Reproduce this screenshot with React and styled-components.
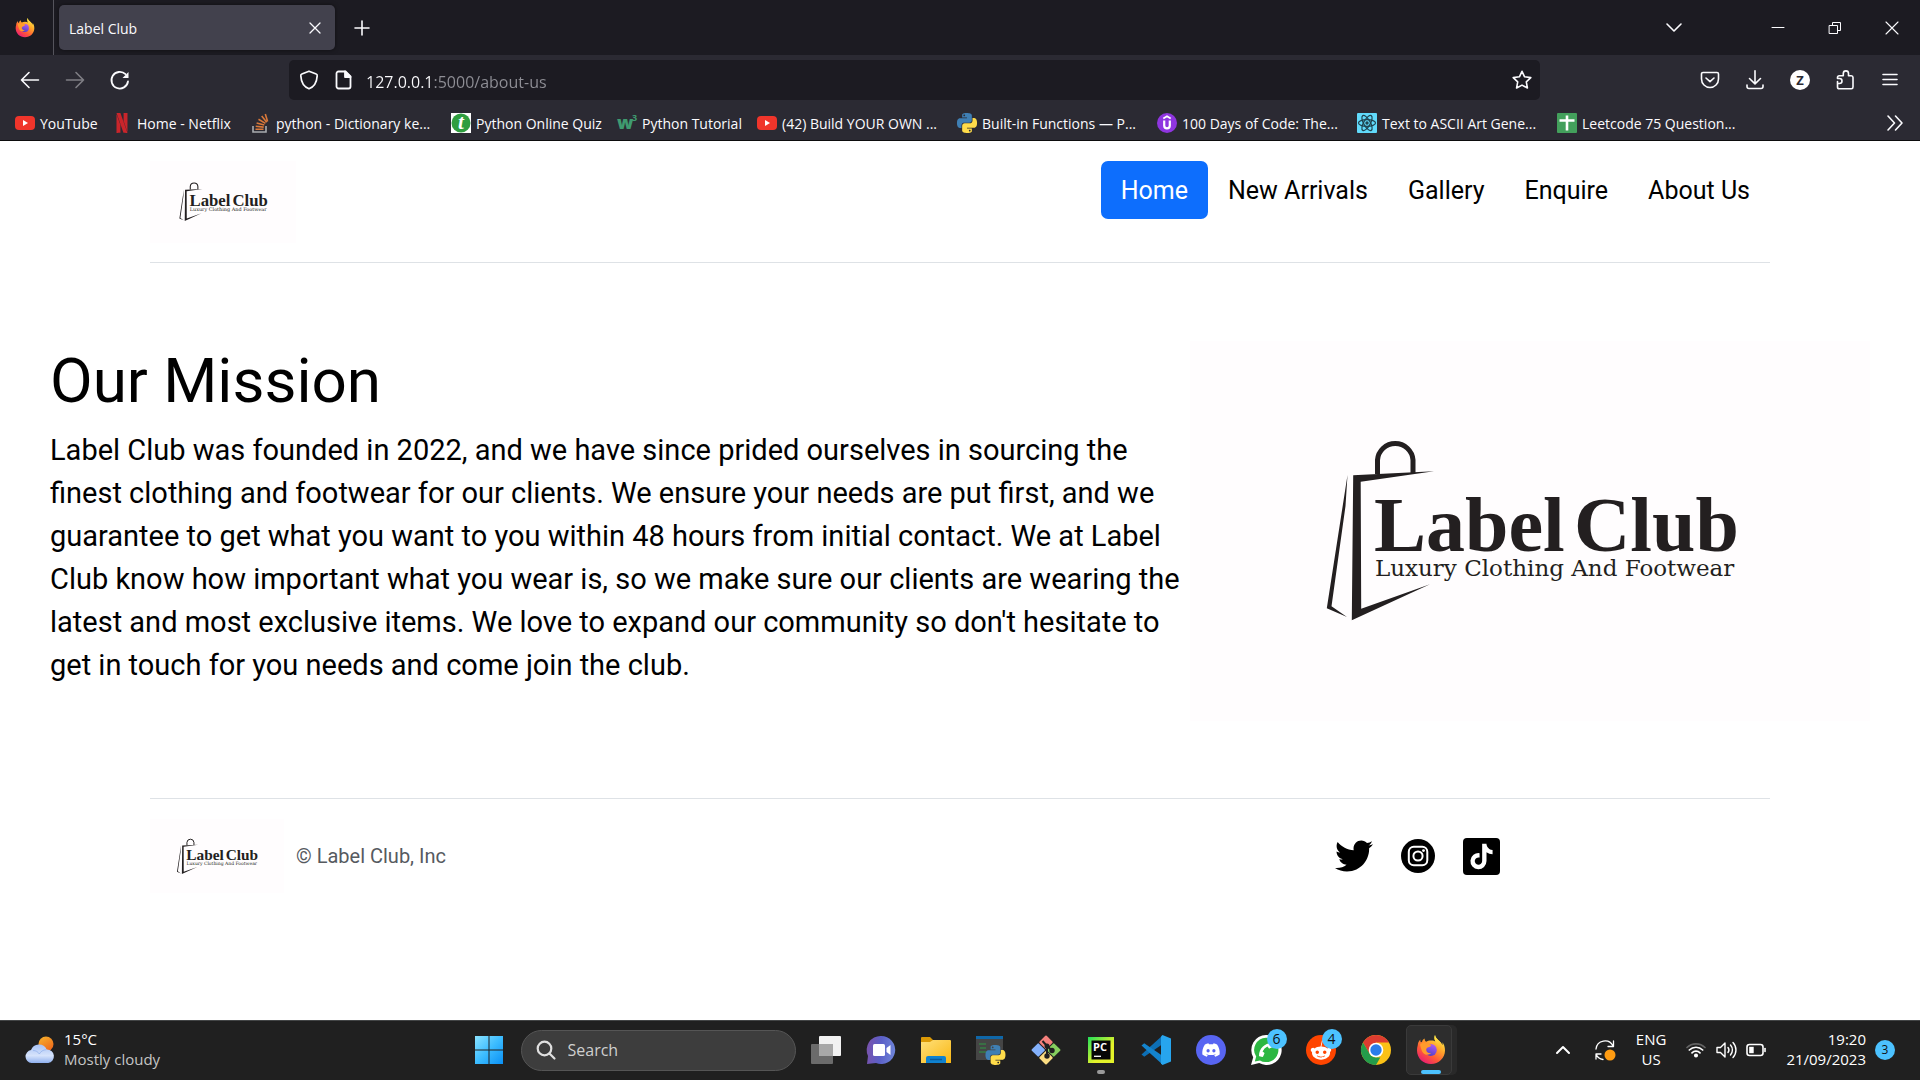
import React from "react";
import styled, { createGlobalStyle } from "styled-components";
import { FaTwitter, FaTiktok, FaDiscord, FaRedditAlien, FaPhoneAlt } from "react-icons/fa";
import { SiNetflix } from "react-icons/si";

const GlobalStyle = createGlobalStyle`
  *, *::before, *::after { box-sizing: border-box; }
  html, body, #root { height: 100%; }
  body { margin: 0; overflow: hidden; background: #fff; }
  ul, h1, p { margin: 0; padding: 0; }
  ul { list-style: none; }
  a { color: inherit; text-decoration: none; }
  button { border: 0; background: none; color: inherit; font: inherit; padding: 0; }
  svg { display: block; flex: none; overflow: visible; }
`;

const uiFont = `"Open Sans", "Noto Sans", sans-serif`;
const webFont = `Roboto, "Liberation Sans", sans-serif`;

const Screen = styled.div`
  display: flex;
  flex-direction: column;
  height: 100vh;
`;

/* ---------- browser ---------- */

const Browser = styled.header`
  background: #2b2a33;
  color: #fbfbfe;
  font: 14px/20px ${uiFont};
  border-bottom: 1px solid #0c0c0d;
`;

const TabStrip = styled.div`
  display: flex;
  align-items: center;
  height: 55px;
  background: #1c1b22;
`;

const FirefoxView = styled.button`
  display: grid;
  place-items: center;
  width: 54px;
  height: 55px;
  padding-right: 3px;
  border-right: 1px solid #55545c;
`;

const Tab = styled.div`
  display: flex;
  align-items: center;
  justify-content: space-between;
  width: 276px;
  height: 45px;
  margin: 0 4px 0 5px;
  padding: 0 10px;
  border-radius: 5px;
  background: #42414d;
  box-shadow: 0 0 4px rgba(0, 0, 0, 0.5);
`;

const TabTitle = styled.span`
  padding-top: 2px;
`;

const ToolButton = styled.button`
  display: grid;
  place-items: center;
  width: 45px;
  height: 40px;
  opacity: ${(p) => (p.$dim ? 0.4 : 1)};
`;

const WindowButtons = styled.div`
  display: flex;
  gap: 12px;
  margin-left: auto;
  padding-right: 6px;

  ${ToolButton}:first-child { margin-right: 47px; }
`;

const NavBar = styled.div`
  display: flex;
  align-items: center;
  height: 50px;
  padding: 0 8px 0 7px;
`;

const Spacer = styled.div`
  flex: 0 1 147px;
`;

const UrlBar = styled.form`
  display: flex;
  flex: 1;
  align-items: center;
  height: 40px;
  padding: 0 8px 0 10px;
  border-radius: 5px;
  background: #1c1b22;
`;

const UrlInput = styled.input`
  flex: 1;
  margin: 0 15px 0 12px;
  padding: 3px 0 0;
  border: 0;
  outline: 0;
  font: 16px/24px ${uiFont};
  color: transparent;
  background: linear-gradient(90deg, #fbfbfe 67px, #8f8f96 67px);
  background-clip: text;
  -webkit-background-clip: text;
`;

const UrlIcons = styled.div`
  display: flex;
  gap: 15px;
`;

const Bookmarks = styled.nav`
  display: flex;
  align-items: center;
  height: 35px;
  padding: 0 15px;
`;

const Bookmark = styled.a`
  display: flex;
  align-items: center;
  gap: 5px;
  width: ${(p) => p.$width}px;
  white-space: nowrap;
`;

const BookmarkTitle = styled.span`
  padding-top: 2px;
`;

const More = styled.button`
  display: grid;
  place-items: center;
  width: 20px;
  height: 30px;
  margin-left: auto;
`;

/* ---------- web page ---------- */

const Page = styled.div`
  flex: 1;
  background: #fff;
  color: #000;
  font: 20px/30px ${webFont};
`;

const Container = styled.div`
  max-width: 1650px;
  margin: 0 auto;
  padding: 0 15px;
`;

const SiteHeader = styled.header`
  display: flex;
  justify-content: space-between;
  align-items: flex-start;
  padding: 20px 0 19px;
  border-bottom: 1px solid #dee2e6;
`;

const LogoLink = styled.a`
  display: block;
  width: ${(p) => p.$width}px;
`;

const NavList = styled.ul`
  display: flex;
`;

const NavLink = styled.a`
  display: block;
  padding: 11px 20px 9px;
  border-radius: 7px;
  font-size: 25px;
  line-height: 38px;
  color: ${(p) => (p.$active ? "#fff" : "#000")};
  background: ${(p) => (p.$active ? "#0d6efd" : "transparent")};
`;

const Mission = styled.main`
  display: flex;
  justify-content: space-between;
  gap: 8px;
  padding: 78px 50px 77px;
`;

const Copy = styled.section`
  flex: 1 1 0;
  padding-top: 2px;
`;

const Title = styled.h1`
  margin-bottom: 10px;
  font-weight: 400;
  font-size: 62px;
  line-height: 76px;
`;

const Lead = styled.p`
  font-size: 29px;
  line-height: 43px;
`;

const Figure = styled.div`
  flex: 0 0 38%;
  max-width: 680px;
`;

const LogoSvg = styled.svg`
  width: 100%;
  height: auto;
  background: #fffdfe;
`;

const SiteFooter = styled.footer`
  display: flex;
  align-items: center;
  justify-content: space-between;
  padding: 20px 0;
  border-top: 1px solid #dee2e6;
`;

const Copyright = styled.div`
  display: flex;
  align-items: center;
  gap: 12px;
  color: #565a5f;
`;

const Social = styled.ul`
  display: flex;
  align-items: center;
  gap: 28px;
  margin-right: calc(100% / 6);
`;

/* ---------- taskbar ---------- */

const Taskbar = styled.footer`
  display: grid;
  grid-template-columns: 1fr auto 1fr;
  align-items: center;
  height: 60px;
  padding-bottom: 1px;
  border-top: 1px solid #434546;
  background: #202020;
  color: #fff;
  font: 15px/20px ${uiFont};
`;

const Weather = styled.button`
  display: flex;
  align-items: center;
  gap: 9px;
  padding-left: 25px;
  text-align: left;
`;

const Stack = styled.span`
  display: flex;
  flex-direction: column;
  padding-bottom: 2px;
  text-align: ${(p) => p.$align};
`;

const Muted = styled.span`
  color: #c5c5c5;
`;

const Apps = styled.div`
  display: flex;
  align-items: center;
`;

const AppButton = styled.button`
  position: relative;
  display: grid;
  place-items: center;
  width: 55px;
  height: 50px;
`;

const ActiveTile = styled.span`
  display: grid;
  place-items: center;
  width: 46px;
  height: 50px;
  margin-right: 4px;
  padding-left: 4px;
  border: 1px solid #3a3a3a;
  border-radius: 5px;
  background: #2d2d2d;
  box-shadow: 5px 0 0 #292929;
`;

const Running = styled.span`
  position: absolute;
  bottom: 1px;
  left: 50%;
  width: ${(p) => (p.$active ? 20 : 8)}px;
  height: 4px;
  margin-left: ${(p) => (p.$active ? -10 : -4)}px;
  border-radius: 2px;
  background: ${(p) => (p.$active ? "#4cc2ff" : "#9a9a9a")};
`;

const Badge = styled.span`
  display: grid;
  place-items: center;
  width: 20px;
  height: 20px;
  border-radius: 50%;
  background: #4cc2ff;
  color: #111;
  font-size: ${(p) => (p.$small ? 12 : 14)}px;
  line-height: 20px;
`;

const CornerBadge = styled(Badge)`
  position: absolute;
  top: 4px;
  right: 7px;
`;

const Search = styled.label`
  display: flex;
  align-items: center;
  gap: 12px;
  width: 275px;
  height: 41px;
  margin: 0 3px 0 4px;
  padding: 0 14px;
  border: 1px solid #555;
  border-radius: 21px;
  background: #3d3d3d;
`;

const SearchInput = styled.input`
  width: 100%;
  padding: 0;
  border: 0;
  outline: 0;
  background: none;
  color: #fff;
  font: 16px/24px ${uiFont};
  &::placeholder { color: #cfcfcf; opacity: 1; }
`;

const Tray = styled.div`
  display: flex;
  align-items: center;
  justify-content: flex-end;
  gap: 20px;
  padding-right: 25px;
`;

const TrayGroup = styled.button`
  display: flex;
  align-items: center;
  gap: ${(p) => p.$gap}px;
`;

/* ---------- drawings ---------- */

const Line = ({ size = 20, box = 20, w = 1.6, children, ...rest }) => (
  <svg width={size} height={size} viewBox={`0 0 ${box} ${box}`} fill="none" stroke="currentColor"
    strokeWidth={w} strokeLinecap="round" strokeLinejoin="round" aria-hidden="true" {...rest}>
    {children}
  </svg>
);

const Art = ({ size = 20, box = 20, children }) => (
  <svg width={size} height={size} viewBox={`0 0 ${box} ${box}`} aria-hidden="true">{children}</svg>
);

const Firefox = ({ size, id }) => (
  <Art size={size} box={30}>
    <defs>
      <linearGradient id={`${id}a`} x1="0.85" y1="0.05" x2="0.2" y2="1">
        <stop offset="0" stopColor="#fff44f" />
        <stop offset="0.35" stopColor="#ffa52a" />
        <stop offset="0.65" stopColor="#ff5a36" />
        <stop offset="1" stopColor="#e8157b" />
      </linearGradient>
      <linearGradient id={`${id}b`} x1="0.7" y1="0" x2="0.3" y2="1">
        <stop offset="0" stopColor="#b15cf5" />
        <stop offset="1" stopColor="#4a3fc4" />
      </linearGradient>
      <linearGradient id={`${id}c`} x1="0.5" y1="0" x2="0.5" y2="1">
        <stop offset="0" stopColor="#fff04a" />
        <stop offset="1" stopColor="#ff9a20" />
      </linearGradient>
    </defs>
    <path fill={`url(#${id}a)`} d="M19 0c-1 2-.8 4.500.6 6.600-1-.5-2.500-1-4.600-1-2 0-3.600.5-4.800 1.200C9 6 8.600 5 8.600 3.500 7 4.300 6.300 5.600 6 7L4.800 7.200C4.300 6.300 4.200 5.500 4.300 4.500 2.500 6.400 1.900 8.300 1.800 10 1.200 12 1 13.600 1 15.500 1 23.200 7.200 29 15 29s14-6 14-13.500c0-3.500-1-6-2.500-8.200.2 1.200.2 2-.1 2.900C25.300 6 20 5 19 0z" />
    <circle cx="14.800" cy="15" r="6" fill={`url(#${id}b)`} />
    <path fill={`url(#${id}c)`} d="M19 0c-1.500 4.500.5 6.800 2.600 9.300 1.800 2.300 2.400 5 1.400 8 2.800-3 2.900-6.800 1.500-9.800C23 5 19.500 4 19 0z" />
    <path fill="#ff9b2b" d="M4 9.500c2-2 4.500-2.200 6.500-1.200 1.500.8 3 1 4.800 1.400-.2 1.500-1.600 2.200-3 2.600-1.800.6-2.600 1.900-1.800 3.800.6 1.600 2.500 2.400 4.600 2-2 2.500-6.200 2.200-8.300-.6C5.500 15.800 5 13 4 9.500z" />
  </Art>
);

const YouTube = () => (
  <Art>
    <rect y="3" width="20" height="14" rx="4" fill="#f0352b" />
    <path d="M8 7v6l5-3z" fill="#fff" />
  </Art>
);

const StackOverflow = () => (
  <Art>
    <path d="M2 13v6h13v-6" fill="none" stroke="#a9acb0" strokeWidth="1.600" />
    <path d="M4.500 16.200h8M4.700 13.300l8 .8M5.600 9.900l7.700 2.200M7.500 6.300l6.900 4.100M10.700 3l5 6.300M14.300 1l2.300 7.500" stroke="#d9783a" strokeWidth="1.600" />
  </Art>
);

const QuizIcon = () => (
  <Art>
    <rect width="20" height="20" fill="#fff" />
    <circle cx="10" cy="10" r="9.500" fill="#2f9e3f" />
    <text x="10" y="16" textAnchor="middle" fontFamily="Liberation Serif, serif" fontWeight="700" fontStyle="italic" fontSize="21" fill="#fff">t</text>
  </Art>
);

const W3Icon = () => (
  <Art>
    <text x="0" y="16" fontFamily="Open Sans, sans-serif" fontWeight="800" fontSize="18" fill="#3f9a70">w</text>
    <text x="15" y="8" fontFamily="Open Sans, sans-serif" fontWeight="700" fontSize="9" fill="#3f9a70">3</text>
  </Art>
);

const pythonHalf = "M14.25.18l.9.2.73.26.59.3.45.32.34.34.25.34.16.33.1.3.04.26.02.2-.01.13V8.5l-.05.63-.13.55-.21.46-.26.38-.3.31-.33.25-.35.19-.35.14-.33.1-.3.07-.26.04-.21.02H8.77l-.69.05-.59.14-.5.22-.41.27-.33.32-.27.35-.2.36-.15.37-.1.35-.07.32-.04.27-.02.21v3.06H3.17l-.21-.03-.28-.07-.32-.12-.35-.18-.36-.26-.36-.36-.35-.46-.32-.59-.28-.73-.21-.88-.14-1.05-.05-1.23.06-1.22.16-1.04.24-.87.32-.71.36-.57.4-.44.42-.33.42-.24.4-.16.36-.1.32-.05.24-.01h.16l.06.01h8.16v-.83H6.18l-.01-2.75-.02-.37.05-.34.11-.31.17-.28.25-.26.31-.23.38-.2.44-.18.51-.15.58-.12.64-.1.71-.06.77-.04.84-.02 1.27.05zm-6.3 1.98l-.23.33-.08.41.08.41.23.34.33.22.41.09.41-.09.33-.22.23-.34.08-.41-.08-.41-.23-.33-.33-.22-.41-.09-.41.09z";

const PythonMark = () => (
  <>
    <path d={pythonHalf} fill="#3f7fb4" fillRule="evenodd" />
    <path d={pythonHalf} fill="#ffdc4a" fillRule="evenodd" transform="rotate(180 12 12)" />
  </>
);

const Udemy = () => (
  <Art>
    <circle cx="10" cy="10" r="10" fill="#8f35e0" />
    <path d="M6.300 5.500L10 3.300l3.700 2.200" fill="none" stroke="#fff" strokeWidth="1.800" />
    <path d="M7.200 7.500v5a2.800 2.800 0 0 0 5.600 0v-5" fill="none" stroke="#fff" strokeWidth="2.200" />
  </Art>
);

const ReactIcon = () => (
  <Art>
    <rect width="20" height="20" rx="1" fill="#61dafb" />
    <g fill="none" stroke="#20434f" strokeWidth="1.200">
      <ellipse cx="10" cy="10" rx="8.500" ry="3.300" />
      <ellipse cx="10" cy="10" rx="8.500" ry="3.300" transform="rotate(60 10 10)" />
      <ellipse cx="10" cy="10" rx="8.500" ry="3.300" transform="rotate(120 10 10)" />
    </g>
    <circle cx="10" cy="10" r="1.700" fill="#20434f" />
  </Art>
);

const Sheets = () => (
  <Art>
    <rect width="20" height="20" rx="1" fill="#43a05c" />
    <path d="M10 2.500v15M2.500 7.500h15" stroke="#fff" strokeWidth="2.600" />
  </Art>
);

const ClubLogo = () => (
  <LogoSvg viewBox="0 0 680 380" role="img" aria-label="Label Club">
    <g fill="#231f20">
      <path d="M157.500 134L136.800 267.300 157 276 141.500 265.300 155.500 165z" />
      <path d="M163.200 134.300L193 132.800 244 130.300 170.700 140.700 171.200 267.700 240 243.300 161.800 279.300z" />
      <path d="M187.500 133V119a17.800 17.800 0 0 1 35.500 0v13" fill="none" stroke="#231f20" strokeWidth="5" />
      <g fontFamily="Liberation Serif, serif" fontWeight="700" fontSize="78">
        <text x="184" y="210">Label</text>
        <text x="384" y="210">Club</text>
      </g>
      <text x="185" y="235" fontFamily="DejaVu Serif, serif" fontSize="23">Luxury Clothing And Footwear</text>
    </g>
  </LogoSvg>
);

const InstagramRound = () => (
  <Art size={34} box={34}>
    <circle cx="17" cy="17" r="17" fill="#000" />
    <rect x="7.800" y="7.800" width="18.500" height="18.500" rx="5" fill="none" stroke="#fff" strokeWidth="2" />
    <circle cx="17" cy="17" r="4.600" fill="none" stroke="#fff" strokeWidth="2" />
    <circle cx="22.500" cy="11.600" r="1.400" fill="#fff" />
  </Art>
);

const TikTokSquare = () => (
  <Art size={37} box={38}>
    <rect width="38" height="38" rx="4" fill="#000" />
    <FaTiktok x="6" y="6" size={26} color="#fff" />
  </Art>
);

const WeatherIcon = () => (
  <Art size={30} box={30}>
    <defs>
      <linearGradient id="sun" x1="0" y1="0" x2="0.6" y2="1">
        <stop offset="0" stopColor="#f7b52c" /><stop offset="1" stopColor="#ee6a1c" />
      </linearGradient>
      <linearGradient id="cloud" x1="0" y1="0" x2="0" y2="1">
        <stop offset="0" stopColor="#a9c3f5" /><stop offset="0.600" stopColor="#d6e3fb" /><stop offset="1" stopColor="#8fb0ee" />
      </linearGradient>
    </defs>
    <circle cx="21" cy="9" r="7.500" fill="url(#sun)" />
    <path d="M6.500 28a6.500 6.500 0 0 1-.5-12.900A8.500 8.500 0 0 1 21.700 14.500 6.800 6.800 0 0 1 23.200 28z" fill="url(#cloud)" />
    <path d="M8 15.500c3 0 5 1.300 6.300 3.500 1.500-2.500 3.800-4.300 7-4.300" fill="none" stroke="#8eaeea" strokeWidth="1" opacity="0.700" />
  </Art>
);

const WindowsIcon = () => (
  <Art size={30} box={30}>
    <defs>
      <linearGradient id="win" x1="0" y1="0" x2="1" y2="1">
        <stop offset="0" stopColor="#8be3ff" /><stop offset="0.500" stopColor="#3cbcff" /><stop offset="1" stopColor="#0a90f5" />
      </linearGradient>
    </defs>
    <path d="M1 1h13.500v13.500H1zM15.500 1H29v13.500H15.500zM1 15.500h13.500V29H1zM15.500 15.500H29V29H15.500z" fill="url(#win)" />
  </Art>
);

const TaskView = () => (
  <Art size={30} box={30}>
    <rect x="8" y="1" width="22" height="20" rx="1" fill="#f2f2f2" />
    <rect x="0" y="9" width="22" height="20" rx="1" fill="#6b6b6b" />
    <rect x="8" y="9" width="14" height="12" fill="#a8a8a8" />
  </Art>
);

const ChatIcon = () => (
  <Art size={30} box={30}>
    <defs>
      <linearGradient id="chat" x1="0" y1="0.200" x2="1" y2="0.300">
        <stop offset="0" stopColor="#7b52ab" /><stop offset="0.500" stopColor="#5b5fc7" /><stop offset="1" stopColor="#6d83d8" />
      </linearGradient>
    </defs>
    <path d="M15 1a14 14 0 1 1-5 27L1 29l1-8A14 14 0 0 1 15 1z" fill="url(#chat)" />
    <rect x="7" y="9" width="12" height="12" rx="1.500" fill="#fff" />
    <path d="M20.500 13l4-3v10l-4-3z" fill="#fff" />
  </Art>
);

const FolderIcon = () => (
  <Art size={30} box={30}>
    <defs>
      <linearGradient id="folder" x1="0" y1="0" x2="1" y2="1">
        <stop offset="0" stopColor="#ffe07a" /><stop offset="1" stopColor="#f9b713" />
      </linearGradient>
    </defs>
    <path d="M0 3a1 1 0 0 1 1-1h8l3 3v4H0z" fill="#dc9a06" />
    <path d="M0 7h9l3-2h17a1 1 0 0 1 1 1v22H0z" fill="url(#folder)" />
    <path d="M5 28v-5a2 2 0 0 1 2-2h16a2 2 0 0 1 2 2v5z" fill="#0f82d0" />
    <path d="M9 24.500h12" stroke="#0a5a9c" strokeWidth="1.500" />
  </Art>
);

const IdleIcon = () => (
  <Art size={30} box={30}>
    <rect x="0" y="1" width="27" height="24" fill="#454545" />
    <rect x="0" y="1" width="27" height="3" fill="#0f67a8" />
    <path d="M3 9h7M4 13h6M3 17h7" stroke="#2f9a45" strokeWidth="1.200" />
    <g transform="translate(9.500 10) scale(0.830)"><PythonMark /></g>
  </Art>
);

const GitIcon = () => (
  <Art size={30} box={30}>
    <g transform="rotate(45 15 15)">
      <rect x="4.500" y="4.500" width="10" height="10" rx="1" fill="#f5807c" />
      <rect x="15.500" y="4.500" width="10" height="10" rx="1" fill="#86cf5e" />
      <rect x="4.500" y="15.500" width="10" height="10" rx="1" fill="#84b1fb" />
      <rect x="15.500" y="15.500" width="10" height="10" rx="1" fill="#fbdd82" />
    </g>
    <path d="M11.500 6L16 11v11M16 11l5 4.500" stroke="#202020" strokeWidth="2" fill="none" />
    <g fill="#202020"><circle cx="16" cy="11" r="2.500" /><circle cx="16" cy="21" r="2.700" /><circle cx="21" cy="15.500" r="2.700" /></g>
  </Art>
);

const PyCharmIcon = () => (
  <Art size={30} box={30}>
    <defs>
      <linearGradient id="pc" x1="0" y1="0" x2="0.600" y2="0.600">
        <stop offset="0" stopColor="#1fe05a" /><stop offset="1" stopColor="#e4f32a" />
      </linearGradient>
    </defs>
    <rect x="2" y="2" width="26" height="26" fill="url(#pc)" />
    <rect x="5.500" y="5.500" width="19" height="19" fill="#060606" />
    <text x="7" y="15.500" fontFamily="Open Sans, sans-serif" fontWeight="700" fontSize="11" fill="#fff">PC</text>
    <path d="M8 21.300h7" stroke="#fff" strokeWidth="1.300" />
  </Art>
);

const VsCodeIcon = () => (
  <Art size={30} box={30}>
    <path d="M21.500 0.500L0.500 19.500l2.700 2.300L24 7.500z" fill="#0d6fb5" />
    <path d="M21.500 29.500L0.500 10.500l2.700-2.300L24 22.500z" fill="#1484cd" />
    <path d="M21.500 0L30 3.500v23L21.500 30 20 28.500V1.500z" fill="#27a5ee" />
  </Art>
);

const DiscordIcon = () => (
  <Art size={30} box={30}>
    <circle cx="15" cy="15" r="15" fill="#5865f2" />
    <FaDiscord x="5.500" y="5.500" size={19} color="#fff" />
  </Art>
);

const WhatsAppIcon = () => (
  <Art size={30} box={30}>
    <path d="M15 0a15 15 0 1 1-6.800 28L0 30l2.200-7.700A15 15 0 0 1 15 0z" fill="#fff" />
    <path d="M15 2.700a12.200 12.200 0 1 1-6 22.700l-5.200 1.200 1.400-5A12.200 12.200 0 0 1 15 2.700z" fill="#2cb742" />
    <g transform="rotate(90 15 15)"><FaPhoneAlt x="8" y="8" size={14} color="#fff" /></g>
  </Art>
);

const RedditIcon = () => (
  <Art size={30} box={30}>
    <circle cx="15" cy="15" r="15" fill="#ff4500" />
    <FaRedditAlien x="4" y="4" size={22} color="#fff" />
  </Art>
);

const ChromeIcon = () => (
  <Art size={30} box={30}>
    <circle cx="15" cy="15" r="15" fill="#fbc116" />
    <path d="M15 15L8.500 18.700 2 7.500A15 15 0 0 1 28 7.500H15z" fill="#dd3c30" />
    <path d="M2 7.500L8.600 18.700A7.500 7.500 0 0 0 15 22.500h4.300L15 30A15 15 0 0 1 2 7.500z" fill="#249c4b" />
    <circle cx="15" cy="15" r="7.300" fill="#fff" />
    <circle cx="15" cy="15" r="5.700" fill="#2a7de9" />
  </Art>
);

const bookmarks = [
  { icon: <YouTube />, text: "YouTube", width: 97 },
  { icon: <SiNetflix size={20} color="#c9252b" />, text: "Home - Netflix", width: 139 },
  { icon: <StackOverflow />, text: "python - Dictionary ke...", width: 200 },
  { icon: <QuizIcon />, text: "Python Online Quiz", width: 166 },
  { icon: <W3Icon />, text: "Python Tutorial", width: 140 },
  { icon: <YouTube />, text: "(42) Build YOUR OWN ...", width: 200 },
  { icon: <Art box={24}><PythonMark /></Art>, text: "Built-in Functions — P...", width: 200 },
  { icon: <Udemy />, text: "100 Days of Code: The...", width: 200 },
  { icon: <ReactIcon />, text: "Text to ASCII Art Gene...", width: 200 },
  { icon: <Sheets />, text: "Leetcode 75 Question...", width: 180 },
];

const pages = ["Home", "New Arrivals", "Gallery", "Enquire", "About Us"];

const apps = [
  { name: "Task view", icon: <TaskView /> },
  { name: "Chat", icon: <ChatIcon /> },
  { name: "File Explorer", icon: <FolderIcon /> },
  { name: "IDLE", icon: <IdleIcon /> },
  { name: "Git", icon: <GitIcon /> },
  { name: "PyCharm", icon: <PyCharmIcon />, running: true },
  { name: "Visual Studio Code", icon: <VsCodeIcon /> },
  { name: "Discord", icon: <DiscordIcon /> },
  { name: "WhatsApp", icon: <WhatsAppIcon />, badge: 6 },
  { name: "Reddit", icon: <RedditIcon />, badge: 4 },
  { name: "Chrome", icon: <ChromeIcon /> },
];

export default function App() {
  return (
    <Screen>
      <GlobalStyle />
      <Browser>
        <TabStrip>
          <FirefoxView aria-label="Firefox View"><Firefox size={20} id="view" /></FirefoxView>
          <Tab>
            <TabTitle>Label Club</TabTitle>
            <button aria-label="Close tab"><Line size={20} w={1.3}><path d="M5 5l10 10M15 5L5 15" /></Line></button>
          </Tab>
          <ToolButton aria-label="New tab"><Line><path d="M10 3v14M3 10h14" /></Line></ToolButton>
          <WindowButtons>
            <ToolButton aria-label="List all tabs"><Line><path d="M3 6l7 7 7-7" /></Line></ToolButton>
            <ToolButton aria-label="Minimize"><Line w={1}><path d="M4 9.500h12" /></Line></ToolButton>
            <ToolButton aria-label="Restore"><Line w={1}><path d="M4.500 7.500h8v8h-8zM7.500 7.500v-3h8v8h-3" /></Line></ToolButton>
            <ToolButton aria-label="Close"><Line w={1.1}><path d="M4 4l12 12M16 4L4 16" /></Line></ToolButton>
          </WindowButtons>
        </TabStrip>
        <NavBar>
          <ToolButton aria-label="Back"><Line><path d="M18.500 10h-17M9 2.500L1.500 10 9 17.500" /></Line></ToolButton>
          <ToolButton $dim aria-label="Forward"><Line><path d="M1.500 10h17M11 2.500l7.500 7.500-7.500 7.500" /></Line></ToolButton>
          <ToolButton aria-label="Reload">
            <Line w={1.8}><path d="M18 11.500A8.300 8.300 0 1 1 15.500 4.200" /><path d="M18.500 2v6h-6z" fill="currentColor" stroke="none" /></Line>
          </ToolButton>
          <Spacer />
          <UrlBar>
            <UrlIcons>
              <Line w={1.7}><path d="M10 1.200L17.200 4c.9.300 1.100.9 1 1.800C17.800 12.500 15 17 10 18.800 5 17 2.200 12.500 1.800 5.800c-.1-.9.100-1.500 1-1.800z" /></Line>
              <Line w={1.8}><path d="M4.500 1.500h7l5 5v10a2 2 0 0 1-2 2h-10a2 2 0 0 1-2-2v-13a2 2 0 0 1 2-2z" /><path d="M11 1.500v5.500h5.500z" fill="currentColor" /></Line>
            </UrlIcons>
            <UrlInput aria-label="Address" defaultValue="127.0.0.1:5000/about-us" />
            <Line w={1.6}><path d="M10 1.300l2.600 5.500 6.200.8-4.500 4.200 1.100 6.200L10 15.100l-5.400 2.900 1.100-6.200L1.200 7.600l6.200-.8z" /></Line>
          </UrlBar>
          <Spacer />
          <ToolButton aria-label="Save to Pocket"><Line><path d="M3 2.500h14a1.500 1.500 0 0 1 1.500 1.500v5a8.500 8.500 0 0 1-17 0V4A1.500 1.500 0 0 1 3 2.500z" /><path d="M6 8l4 3.700L14 8" /></Line></ToolButton>
          <ToolButton aria-label="Downloads"><Line><path d="M10 .8v13M4.500 8.500L10 13.800l5.500-5.300M2 15v1.500a2 2 0 0 0 2 2h12a2 2 0 0 0 2-2V15" /></Line></ToolButton>
          <ToolButton aria-label="Account">
            <Art><circle cx="10" cy="10" r="10" fill="#fff" /><text x="10" y="14.500" textAnchor="middle" fontFamily="Open Sans, sans-serif" fontWeight="700" fontSize="13" fill="#2b2a33">Z</text></Art>
          </ToolButton>
          <ToolButton aria-label="Extensions"><Line><path d="M2.500 11.500V17a1.800 1.800 0 0 0 1.800 1.800h12A1.800 1.800 0 0 0 18 17V7.500A1.800 1.800 0 0 0 16.300 5.700H13.500V3.500a2.600 2.600 0 0 0-5.200 0v2.200H4.300a1.800 1.800 0 0 0-1.800 1.800v1h2a2.200 2.200 0 0 1 0 5h-2" /></Line></ToolButton>
          <ToolButton aria-label="Menu"><Line><path d="M3 4.500h14M3 9.500h14M3 14.500h14" /></Line></ToolButton>
        </NavBar>
        <Bookmarks>
          {bookmarks.map((b) => (
            <Bookmark key={b.text} href="#" $width={b.width}>{b.icon}<BookmarkTitle>{b.text}</BookmarkTitle></Bookmark>
          ))}
          <More aria-label="Show more bookmarks"><Line><path d="M3 3l6.500 7L3 17M10.500 3l6.500 7-6.500 7" /></Line></More>
        </Bookmarks>
      </Browser>

      <Page>
        <Container>
          <SiteHeader>
            <LogoLink href="#" $width={146}><ClubLogo /></LogoLink>
            <nav>
              <NavList>
                {pages.map((name, i) => (
                  <li key={name}><NavLink href="#" $active={i === 0}>{name}</NavLink></li>
                ))}
              </NavList>
            </nav>
          </SiteHeader>
        </Container>
        <Mission>
          <Copy>
            <Title>Our Mission</Title>
            <Lead>
              Label Club was founded in 2022, and we have since prided ourselves in sourcing the finest clothing and
              footwear for our clients. We ensure your needs are put first, and we guarantee to get what you want to
              you within 48 hours from initial contact. We at Label Club know how important what you wear is, so we
              make sure our clients are wearing the latest and most exclusive items. We love to expand our community
              so don't hesitate to get in touch for you needs and come join the club.
            </Lead>
          </Copy>
          <Figure><ClubLogo /></Figure>
        </Mission>
        <Container>
          <SiteFooter>
            <Copyright>
              <LogoLink href="#" $width={134}><ClubLogo /></LogoLink>
              <span>© Label Club, Inc</span>
            </Copyright>
            <Social>
              <li><a href="#" aria-label="Twitter"><FaTwitter size={38} /></a></li>
              <li><a href="#" aria-label="Instagram"><InstagramRound /></a></li>
              <li><a href="#" aria-label="TikTok"><TikTokSquare /></a></li>
            </Social>
          </SiteFooter>
        </Container>
      </Page>

      <Taskbar>
        <Weather>
          <WeatherIcon />
          <Stack $align="left"><span>15°C</span><Muted>Mostly cloudy</Muted></Stack>
        </Weather>
        <Apps>
          <AppButton aria-label="Start"><WindowsIcon /></AppButton>
          <Search>
            <Line w={2.2} stroke="#e0e0e0"><circle cx="8.500" cy="8.500" r="6.800" /><path d="M13.500 13.500l5 5" /></Line>
            <SearchInput placeholder="Search" aria-label="Search" />
          </Search>
          {apps.map((a) => (
            <AppButton key={a.name} aria-label={a.name}>
              {a.icon}
              {a.badge && <CornerBadge>{a.badge}</CornerBadge>}
              {a.running && <Running />}
            </AppButton>
          ))}
          <AppButton aria-label="Firefox">
            <ActiveTile><Firefox size={30} id="task" /></ActiveTile>
            <Running $active />
          </AppButton>
        </Apps>
        <Tray>
          <TrayGroup $gap={21}>
            <Line w={2} size={20}><path d="M4 13l6-6 6 6" /></Line>
            <Line w={1.3} size={22} box={22}>
              <path d="M2 10a9 9 0 0 1 17-3M19.500 2v5.500h-5.500M9 20.500a9 9 0 0 1-7-5.500M2 20v-5h5" />
              <circle cx="16" cy="16" r="5.500" fill="#ff9c12" stroke="none" />
            </Line>
          </TrayGroup>
          <Stack $align="center"><span>ENG</span><span>US</span></Stack>
          <TrayGroup $gap={10}>
            <Line w={1.7}><path d="M1 7.500a12.800 12.800 0 0 1 18 0" opacity="0.300" /><path d="M3.300 10a9.500 9.500 0 0 1 13.400 0M6 12.800a5.700 5.700 0 0 1 8 0" /><circle cx="10" cy="15.500" r="1.200" fill="currentColor" /></Line>
            <Line w={1.4}><path d="M1 7.500v5h3.500L9 17V3L4.500 7.500zM12 7.500a4 4 0 0 1 0 5M14.500 5a7.500 7.500 0 0 1 0 10M17 2.500a11 11 0 0 1 0 15" /></Line>
            <Line w={1.6}><rect x="1" y="4.500" width="16" height="11" rx="2.500" /><rect x="3.200" y="6.800" width="4.500" height="6.400" fill="currentColor" stroke="none" /><path d="M19 8.500v3" /></Line>
          </TrayGroup>
          <TrayGroup $gap={9}>
            <Stack $align="right"><span>19:20</span><span>21/09/2023</span></Stack>
            <Badge $small>3</Badge>
          </TrayGroup>
        </Tray>
      </Taskbar>
    </Screen>
  );
}
